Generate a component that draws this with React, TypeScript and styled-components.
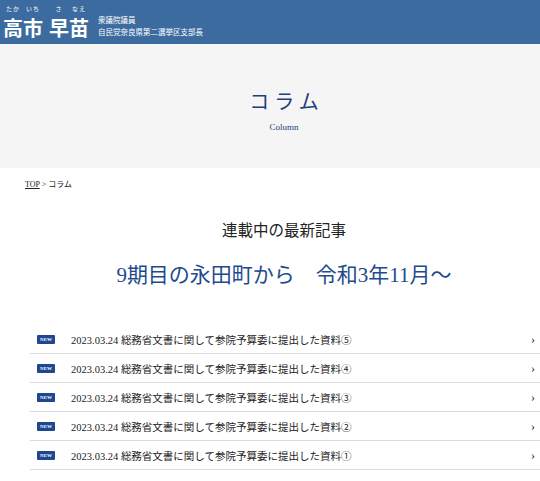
import { createGlobalStyle, styled } from "styled-components";

const GlobalStyle = createGlobalStyle`
  body {
    margin: 0;
    background: #ffffff;
    font-family: "Liberation Serif", "Noto Sans CJK JP", serif;
    color: #222;
  }
`;

const nameChars = [
  { k: "高", r: "たか" },
  { k: "市", r: "いち" },
  { k: "早", r: "さ", gap: true },
  { k: "苗", r: "なえ" },
];

const items = ["⑤", "④", "③", "②", "①"];

export const App = () => {
  return (
    <div>
      <GlobalStyle />
      <Header>
        <Name>
          {nameChars.map((c) => (
            <Char key={c.k} $gap={c.gap}>
              <Kana>{c.r}</Kana>
              <Kanji>{c.k}</Kanji>
            </Char>
          ))}
        </Name>
        <Titles>
          <span>衆議院議員</span>
          <span>自民党奈良県第二選挙区支部長</span>
        </Titles>
      </Header>
      <Hero>
        <HeroTitle>コラム</HeroTitle>
        <HeroSub>Column</HeroSub>
      </Hero>
      <Crumbs>
        <a href="#">TOP</a> &gt; コラム
      </Crumbs>
      <Section>
        <Lead>連載中の最新記事</Lead>
        <Series>9期目の永田町から　令和3年11月〜</Series>
      </Section>
      <List>
        {items.map((n) => (
          <Row key={n}>
            <Badge>NEW</Badge>
            <RowText>2023.03.24 総務省文書に関して参院予算委に提出した資料{n}</RowText>
            <Chevron>›</Chevron>
          </Row>
        ))}
      </List>
    </div>
  );
};
export default App;

const Header = styled.header`
  height: 44px;
  background: #3c6c9f;
  display: flex;
  align-items: flex-end;
  padding: 0 0 6px 3px;
  box-sizing: border-box;
  gap: 9px;
  color: #fff;
  font-family: "Noto Sans CJK JP", sans-serif;
`;
const Name = styled.div`
  display: flex;
`;
const Char = styled.div<{ $gap?: boolean }>`
  display: flex;
  flex-direction: column;
  align-items: center;
  width: 20px;
  margin-left: ${(p) => (p.$gap ? "6px" : "0")};
`;
const Kana = styled.span`
  font-size: 6px;
  line-height: 7px;
  letter-spacing: 1px;
  white-space: nowrap;
  margin-bottom: 6px;
`;
const Kanji = styled.span`
  font-size: 20px;
  font-weight: 700;
  line-height: 20px;
`;
const Titles = styled.div`
  display: flex;
  flex-direction: column;
  font-size: 7.5px;
  line-height: 12px;
`;
const Hero = styled.section`
  height: 124px;
  background: #f5f5f5;
  display: flex;
  flex-direction: column;
  align-items: center;
  justify-content: center;
  padding: 8px 0 0 28px;
  box-sizing: border-box;
`;
const HeroTitle = styled.h1`
  margin: 0;
  font-size: 20px;
  font-weight: 400;
  letter-spacing: 5px;
  padding-left: 5px;
  color: #1e3f7c;
  line-height: 28px;
`;
const HeroSub = styled.p`
  margin: 6px 0 0;
  font-size: 9px;
  color: #1e3f7c;
`;
const Crumbs = styled.nav`
  padding: 10px 25px 0;
  font-size: 8px;
  height: 20px;
  box-sizing: border-box;
  color: #222;

  a {
    color: #222;
  }
`;
const Section = styled.section`
  display: flex;
  flex-direction: column;
  align-items: center;
  padding: 32px 0 0 28px;
`;
const Lead = styled.h2`
  margin: 0;
  font-size: 15.5px;
  font-weight: 400;
  line-height: 22px;
  color: #222;
`;
const Series = styled.h3`
  margin: 18px 0 0;
  font-size: 21px;
  font-weight: 400;
  color: #1e4a8e;
  line-height: 30px;
`;
const List = styled.ul`
  list-style: none;
  margin: 35px 0 0 30px;
  padding: 0;
`;
const Row = styled.li`
  height: 29px;
  border-bottom: 1px solid #dcdcdc;
  display: flex;
  align-items: center;
  box-sizing: border-box;
  padding: 0 5px 0 7px;
`;
const Badge = styled.span`
  width: 18px;
  height: 9px;
  background: #1f4690;
  color: #fff;
  font-size: 5px;
  font-weight: 700;
  display: flex;
  align-items: center;
  justify-content: center;
  border-radius: 1px;
`;
const RowText = styled.span`
  flex: 1;
  margin-left: 16px;
  font-size: 10.5px;
  color: #222;
`;
const Chevron = styled.span`
  font-size: 12px;
  color: #222;
`;
